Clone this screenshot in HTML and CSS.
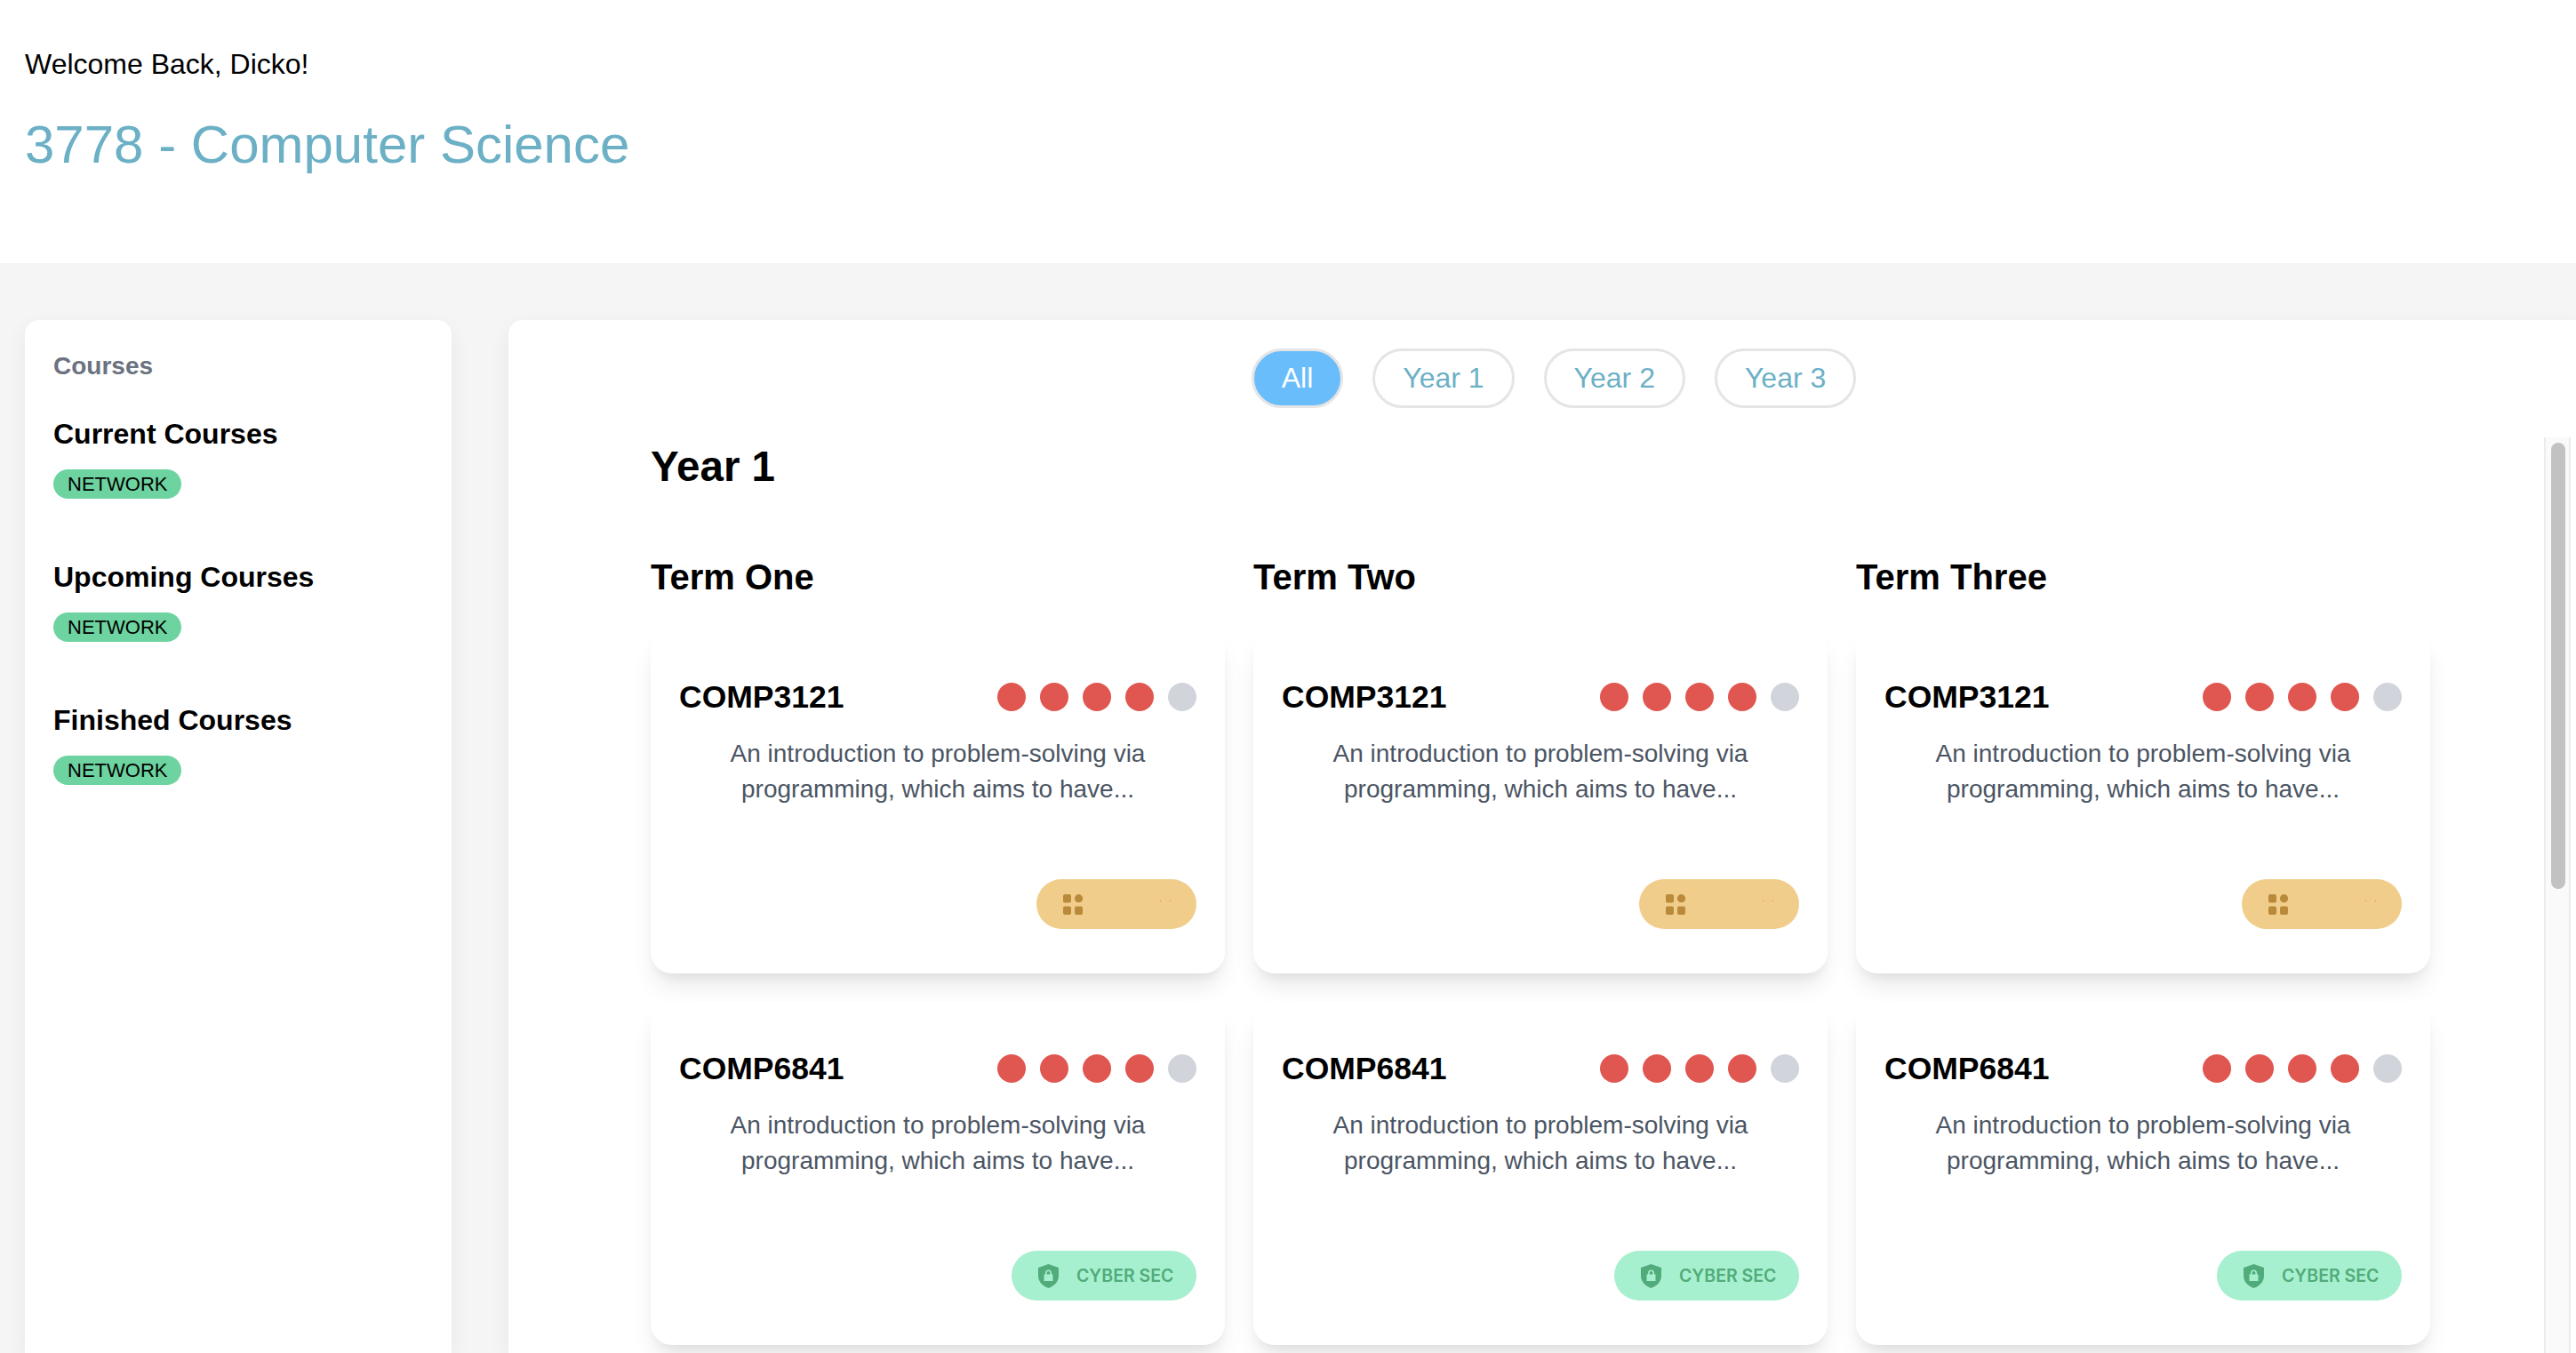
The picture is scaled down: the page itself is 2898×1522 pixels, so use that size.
FILE: index.html
```html
<!DOCTYPE html>
<html lang="en">
<head>
  <meta charset="UTF-8" />
  <title>3778 - Computer Science</title>
  <link rel="stylesheet" href="styles.css">
</head>
<body>
  <header class="page-header">
    <p class="welcome">Welcome Back, Dicko!</p>
    <h1 class="program-title">3778 - Computer Science</h1>
  </header>

  <div class="page-body">
    <aside class="sidebar">
      <h2 class="sidebar-title">Courses</h2>
      <section class="course-group">
        <h3>Current Courses</h3>
        <span class="tag">NETWORK</span>
      </section>
      <section class="course-group">
        <h3>Upcoming Courses</h3>
        <span class="tag">NETWORK</span>
      </section>
      <section class="course-group">
        <h3>Finished Courses</h3>
        <span class="tag">NETWORK</span>
      </section>
    </aside>

    <main class="main-panel">
      <nav class="year-filters">
        <button class="pill active">All</button>
        <button class="pill">Year 1</button>
        <button class="pill">Year 2</button>
        <button class="pill">Year 3</button>
      </nav>

      <div class="scroll-area">
        <h2 class="year-title">Year 1</h2>
        <div class="term-grid">
          <h3 class="term-title">Term One</h3>
          <h3 class="term-title">Term Two</h3>
          <h3 class="term-title">Term Three</h3>

          <article class="card">
            <div class="card-head"><h4>COMP3121</h4><div class="rating"><i></i><i></i><i></i><i></i><i class="off"></i></div></div>
            <p class="card-text">An introduction to problem-solving via programming, which aims to have...</p>
            <div class="card-foot"><span class="badge badge-core"><svg class="badge-icon" viewBox="0 0 22 23"><rect x="0" y="0" width="9" height="9.5" rx="2"/><circle cx="17.5" cy="4.7" r="4.6"/><rect x="0" y="13.5" width="9" height="9.5" rx="2"/><rect x="13" y="13.5" width="9" height="9.5" rx="2"/></svg><span class="badge-dots"><b></b><b></b></span></span></div>
          </article>
          <article class="card">
            <div class="card-head"><h4>COMP3121</h4><div class="rating"><i></i><i></i><i></i><i></i><i class="off"></i></div></div>
            <p class="card-text">An introduction to problem-solving via programming, which aims to have...</p>
            <div class="card-foot"><span class="badge badge-core"><svg class="badge-icon" viewBox="0 0 22 23"><rect x="0" y="0" width="9" height="9.5" rx="2"/><circle cx="17.5" cy="4.7" r="4.6"/><rect x="0" y="13.5" width="9" height="9.5" rx="2"/><rect x="13" y="13.5" width="9" height="9.5" rx="2"/></svg><span class="badge-dots"><b></b><b></b></span></span></div>
          </article>
          <article class="card">
            <div class="card-head"><h4>COMP3121</h4><div class="rating"><i></i><i></i><i></i><i></i><i class="off"></i></div></div>
            <p class="card-text">An introduction to problem-solving via programming, which aims to have...</p>
            <div class="card-foot"><span class="badge badge-core"><svg class="badge-icon" viewBox="0 0 22 23"><rect x="0" y="0" width="9" height="9.5" rx="2"/><circle cx="17.5" cy="4.7" r="4.6"/><rect x="0" y="13.5" width="9" height="9.5" rx="2"/><rect x="13" y="13.5" width="9" height="9.5" rx="2"/></svg><span class="badge-dots"><b></b><b></b></span></span></div>
          </article>

          <article class="card">
            <div class="card-head"><h4>COMP6841</h4><div class="rating"><i></i><i></i><i></i><i></i><i class="off"></i></div></div>
            <p class="card-text">An introduction to problem-solving via programming, which aims to have...</p>
            <div class="card-foot"><span class="badge badge-cyber"><svg class="shield-icon" viewBox="0 0 23 27"><path fill-rule="evenodd" d="M11.5 0L23 4v9c0 7-4.800 11.500-11.500 14C4.800 24.500 0 20 0 13V4zM8 11.500V10a3.500 3.500 0 0 1 7 0v1.500h1.500V19h-10v-7.500zM9.600 11.500h3.800V10a1.900 1.900 0 0 0-3.800 0z"/></svg><span>CYBER SEC</span></span></div>
          </article>
          <article class="card">
            <div class="card-head"><h4>COMP6841</h4><div class="rating"><i></i><i></i><i></i><i></i><i class="off"></i></div></div>
            <p class="card-text">An introduction to problem-solving via programming, which aims to have...</p>
            <div class="card-foot"><span class="badge badge-cyber"><svg class="shield-icon" viewBox="0 0 23 27"><path fill-rule="evenodd" d="M11.5 0L23 4v9c0 7-4.800 11.500-11.500 14C4.800 24.500 0 20 0 13V4zM8 11.500V10a3.500 3.500 0 0 1 7 0v1.500h1.500V19h-10v-7.500zM9.600 11.500h3.800V10a1.900 1.900 0 0 0-3.800 0z"/></svg><span>CYBER SEC</span></span></div>
          </article>
          <article class="card">
            <div class="card-head"><h4>COMP6841</h4><div class="rating"><i></i><i></i><i></i><i></i><i class="off"></i></div></div>
            <p class="card-text">An introduction to problem-solving via programming, which aims to have...</p>
            <div class="card-foot"><span class="badge badge-cyber"><svg class="shield-icon" viewBox="0 0 23 27"><path fill-rule="evenodd" d="M11.5 0L23 4v9c0 7-4.800 11.500-11.500 14C4.800 24.500 0 20 0 13V4zM8 11.500V10a3.500 3.500 0 0 1 7 0v1.500h1.500V19h-10v-7.500zM9.600 11.500h3.800V10a1.900 1.900 0 0 0-3.800 0z"/></svg><span>CYBER SEC</span></span></div>
          </article>
        </div>
      </div>

      <div class="scroll-track"><div class="scroll-thumb"></div></div>
    </main>
  </div>
</body>
</html>
```
FILE: styles.css
```css
* { box-sizing: border-box; }
html, body { height: 100%; }
body {
  margin: 0;
  display: flex;
  flex-direction: column;
  overflow: hidden;
  font-family: "Liberation Sans", Arial, sans-serif;
  background-color: #f5f5f5;
  color: #000;
}
h1, h2, h3, h4, p { margin: 0; }

.page-header {
  height: 296px;
  flex: none;
  padding: 52px 28px 0;
  background-color: #fff;
}
.welcome { font-size: 32px; line-height: 40px; }
.program-title {
  margin-top: 35px;
  font-size: 60px;
  line-height: 72px;
  font-weight: 400;
  color: #6cb0c6;
}

.page-body {
  flex: 1;
  min-height: 0;
  display: flex;
  gap: 64px;
  padding: 64px 0 0 28px;
}
.sidebar {
  width: 480px;
  flex: none;
  padding: 36px 32px;
  background-color: #fff;
  border-radius: 16px 16px 0 0;
  box-shadow: 0 8px 24px rgba(0,0,0,0.06);
}
.sidebar-title { font-size: 28px; line-height: 32px; color: #6b7280; }
.course-group { margin-bottom: 68px; }
.sidebar-title + .course-group { margin-top: 40px; }
.course-group h3 { font-size: 32px; line-height: 40px; }
.tag {
  display: inline-block;
  margin-top: 20px;
  padding: 0 16px;
  font-size: 22px;
  line-height: 33px;
  border-radius: 17px;
  background-color: #6dd3a0;
}

.main-panel {
  position: relative;
  flex: 1;
  min-width: 0;
  display: flex;
  flex-direction: column;
  background-color: #fff;
  border-radius: 16px 0 0 0;
  box-shadow: 0 8px 24px rgba(0,0,0,0.06);
}
.year-filters {
  display: flex;
  justify-content: center;
  gap: 33px;
  padding: 32px 0 32px 26px;
  flex: none;
}
.pill {
  height: 67px;
  padding: 0 31px;
  font: 32px "Liberation Sans", Arial, sans-serif;
  color: #6cb0c6;
  background-color: #fff;
  border: 3px solid #e5e5e5;
  border-radius: 34px;
}
.pill.active { background-color: #6abdfb; color: #fff; }

.scroll-area {
  flex: 1;
  min-height: 0;
  padding-left: 160px;
  overflow: hidden;
}
.scroll-track {
  position: absolute;
  top: 132px;
  bottom: 0;
  right: 6px;
  width: 30px;
  padding: 6px 6px 0 8px;
  background-color: #fafafa;
  border-left: 2px solid #ececec;
  border-right: 2px solid #ececec;
}
.scroll-thumb {
  width: 16px;
  height: 502px;
  margin-left: -2px;
  background-color: #c2c2c2;
  border-radius: 8px;
}

.year-title { margin-top: 5px; font-size: 47.500px; line-height: 58px; }
.term-grid {
  display: grid;
  grid-template-columns: repeat(3, 646px);
  column-gap: 32px;
  row-gap: 32px;
}
.term-title {
  margin-top: 71px;
  margin-bottom: 4px;
  font-size: 40px;
  line-height: 48px;
}
.card {
  height: 386px;
  display: flex;
  flex-direction: column;
  padding: 59px 32px 0;
  background-color: #fff;
  border-radius: 24px;
  box-shadow: 0 18px 28px -6px rgba(0,0,0,0.1), 0 8px 12px -4px rgba(0,0,0,0.05);
}
.card-head {
  display: flex;
  justify-content: space-between;
  align-items: center;
  height: 32px;
}
.card-head h4 { font-size: 35.500px; line-height: 40px; }
.rating { display: flex; gap: 16px; }
.rating i {
  width: 32px;
  height: 32px;
  border-radius: 50%;
  background-color: #e05650;
}
.rating i.off { background-color: #d1d5db; }
.card-text {
  margin-top: 28px;
  font-size: 28px;
  line-height: 40px;
  text-align: center;
  color: #4b5563;
}
.card-foot {
  margin-top: auto;
  padding-bottom: 50px;
  display: flex;
  justify-content: flex-end;
}
.badge {
  display: flex;
  align-items: center;
  height: 56px;
  border-radius: 28px;
}
.badge-core {
  width: 180px;
  padding-left: 30px;
  background-color: #f1cd8b;
}
.badge-icon { width: 22px; height: 23px; fill: #b98a3a; }
.badge-dots {
  display: flex;
  gap: 10px;
  margin: -8px 0 0 87px;
}
.badge-dots b {
  width: 1px;
  height: 1px;
  background-color: #c98f3f;
}
.badge-cyber {
  width: 208px;
  padding-left: 30px;
  gap: 20px;
  background-color: #a7f0cf;
  color: #51ab7a;
  font: 600 19.500px Inter, sans-serif;
}
.shield-icon { width: 23px; height: 27px; fill: #51ab7a; }
```
